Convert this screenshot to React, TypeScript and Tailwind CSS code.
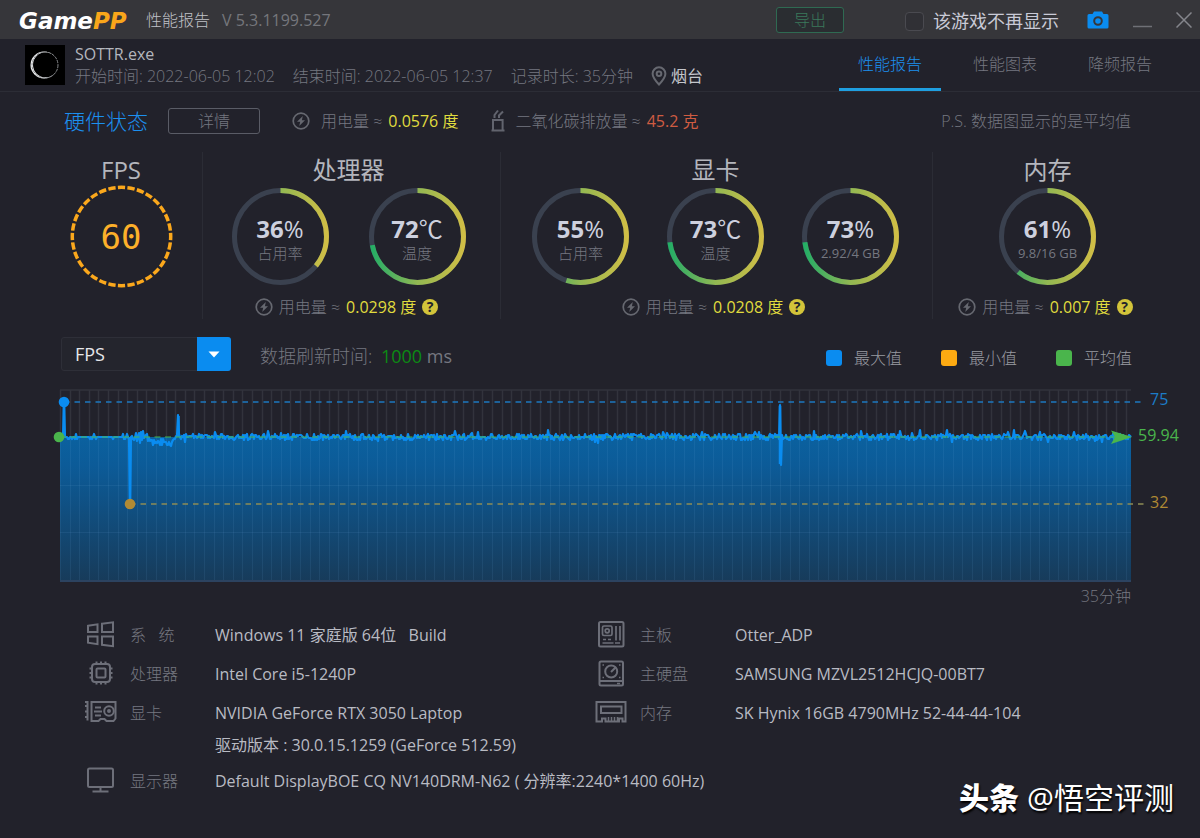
import { useState, type ReactNode } from "react";
import clsx from "clsx";

const BLUE = "#0a8cf0";
const GREEN = "#4ab54c";
const AMBER = "#b08a34";

const tabs = ["性能报告", "性能图表", "降频报告"];

const legend = [
  { label: "最大值", color: "bg-[#0a8cf0]" },
  { label: "最小值", color: "bg-[#fdaa12]" },
  { label: "平均值", color: "bg-[#4ab54c]" },
];

/* ---------- icons ---------- */

const BoltIcon = ({ className }: { className?: string }) => (
  <svg viewBox="0 0 18 18" className={clsx("w-[18px] h-[18px] shrink-0 text-[#666870]", className)} fill="none">
    <circle cx="9" cy="9" r="7.8" stroke="currentColor" strokeWidth="1.7" />
    <path d="M10.8 4 5 9.7h3.2L7.2 14l5.8-5.8H9.9z" fill="currentColor" />
  </svg>
);

const ChimneyIcon = () => (
  <svg viewBox="0 0 16 24" className="w-4 h-6 text-[#62646e]" fill="none" stroke="currentColor" strokeWidth="2">
    <path d="M1.5 21.5h13M3 21.5V11h9.6v10.5M2 11h11.6M4.5 9V6L8 1.5M9 9V6.5L13 2.5" />
  </svg>
);

const PinIcon = () => (
  <svg viewBox="0 0 16 20" className="w-4 h-5 text-[#666870]" fill="none" stroke="currentColor" strokeWidth="2">
    <path d="M8 18.5C4.2 14.4 1.6 11.2 1.6 7.7a6.4 6.4 0 0 1 12.8 0c0 3.5-2.6 6.7-6.4 10.8z" />
    <circle cx="8" cy="7.8" r="2.3" />
  </svg>
);

const CameraIcon = () => (
  <svg viewBox="0 0 22 18" className="w-[22px] h-[18px]">
    <path
      fillRule="evenodd"
      fill={BLUE}
      d="M7 .5h8l1.5 2.5H20a1.5 1.5 0 0 1 1.5 1.5v11.5A1.5 1.5 0 0 1 20 17.5H2a1.5 1.5 0 0 1-1.5-1.5v-11.5A1.5 1.5 0 0 1 2 3h3.5zM11 5.2a4.8 4.8 0 1 0 0 9.6 4.8 4.8 0 0 0 0-9.6zM11 7.2a2.8 2.8 0 1 1 0 5.6 2.8 2.8 0 0 1 0-5.6z"
    />
  </svg>
);

const HelpIcon = () => (
  <span className="flex items-center justify-center w-4 h-4 rounded-full bg-[#d3c43a] text-[#22232b] text-[14px] leading-4 font-bold">
    ?
  </span>
);

const DeviceIcon = ({ children }: { children: ReactNode }) => (
  <svg viewBox="0 0 32 28" className="w-8 h-7 shrink-0 text-[#6d6f79]" fill="none" stroke="currentColor" strokeWidth="2">
    {children}
  </svg>
);

const WindowsIcon = () => (
  <DeviceIcon>
    <path d="M3 4.8 12.5 3.3v7.7H3zM17 2.7 28 1.3V11H17zM3 15.5h9.5v7.7L3 21.7zM17 15.5h11v9.7l-11-1.4z" />
  </DeviceIcon>
);

const CpuIcon = () => (
  <DeviceIcon>
    <rect x="7" y="4" width="18" height="18" rx="3" />
    <rect x="11.5" y="8.5" width="9" height="9" rx="1" />
    <path d="M11.5 4V1.5M16 4V1.5M20.5 4V1.5M11.5 22v2.5M16 22v2.5M20.5 22v2.5M7 8.5H4.5M7 13H4.5M7 17.5H4.5M25 8.5H27.5M25 13H27.5M25 17.5H27.5" />
  </DeviceIcon>
);

const GpuIcon = () => (
  <DeviceIcon>
    <path d="M0 3h2.5v18.5M2.5 7H0M2.5 12.5H0M2.5 18H0" />
    <path d="M6.5 3h24v16.5l-2 2.5h-7l-2-2h-4l-2 2h-7zM10 8.5h6M9 12.5h8M10 16.5h6" />
    <circle cx="24" cy="12" r="4.8" />
    <circle cx="24" cy="12" r="1" />
  </DeviceIcon>
);

const MonitorIcon = () => (
  <DeviceIcon>
    <rect x="3" y="1.5" width="25" height="18.5" rx="1.5" />
    <path d="M15.5 20v4M7.5 24.5h16" />
  </DeviceIcon>
);

const BoardIcon = () => (
  <DeviceIcon>
    <rect x="4" y="1" width="24.5" height="24.5" rx="1.5" />
    <rect x="7.5" y="5" width="9.5" height="9.5" rx="1.5" strokeWidth="1.7" />
    <circle cx="12.2" cy="9.8" r="2" strokeWidth="1.7" />
    <path d="M21 5v14.5M25 5v14.5M8 18.5h3M13 18.5h3M7.5 22h11M20 22h5" strokeWidth="1.7" />
  </DeviceIcon>
);

const DiskIcon = () => (
  <DeviceIcon>
    <rect x="4.5" y="1.5" width="23.5" height="24" rx="1.5" />
    <circle cx="16.2" cy="11.5" r="6" />
    <path d="M16 12 21 7M5 21h23" />
    <path d="M7.5 5h1.5M24 5h1.5M7.5 17.5h1.5M24 17.5h1.5M22 23.5h3" strokeWidth="1.5" />
  </DeviceIcon>
);

const RamIcon = () => (
  <DeviceIcon>
    <path d="M1.5 3h29v19.5h-3v-3h-3.5v3H10.5v-3H7v3H1.5zM6 7.5h20.5v6.5H6z" />
    <path d="M13.5 22v-4M16.5 22v-4M19.5 22v-4M22.5 22v-4" strokeWidth="1.5" />
  </DeviceIcon>
);

/* ---------- metric rings ---------- */

interface RingProps {
  value: number;
  unit: string;
  caption: string;
  small?: boolean;
}

const Ring = ({ value, unit, caption, small }: RingProps) => (
  <div className="grid place-items-center w-[97px] h-[97px]">
    <svg viewBox="0 0 97 97" className="w-full h-full [grid-area:1/1]" fill="none" strokeWidth="5">
      <defs>
        <linearGradient id="ring" gradientUnits="userSpaceOnUse" x1="0" y1="0" x2="97" y2="0">
          <stop offset="0" stopColor="#1fae66" />
          <stop offset="0.2" stopColor="#4bb060" />
          <stop offset="0.5" stopColor="#92b852" />
          <stop offset="1" stopColor="#d3be45" />
        </linearGradient>
      </defs>
      <circle cx="48.5" cy="48.5" r="46" stroke="#3a414f" />
      <path
        d="M48.5 2.5a46 46 0 0 1 0 92a46 46 0 0 1 0-92"
        stroke="url(#ring)"
        pathLength={100}
        strokeDasharray={`${value} 100`}
      />
    </svg>
    <div className="[grid-area:1/1] pt-1 text-center">
      <div className="text-[24px] leading-7 text-[#cdd0de] font-normal">
        <span className="font-bold">{value}</span>
        {unit}
      </div>
      <div className={clsx("leading-5 text-[#757780]", small ? "text-[13px] font-normal" : "text-[15px]")}>
        {caption}
      </div>
    </div>
  </div>
);

const Power = ({ value }: { value: string }) => (
  <div className="flex items-center mt-[10px] mr-1 h-6 text-[16px] text-[#757780] whitespace-nowrap">
    <BoltIcon className="mr-[6px]" />
    用电量 ≈<span className="mx-[6px] text-[#e0dc3e] font-normal">{value} 度</span>
    <HelpIcon />
  </div>
);

interface MetricGroupProps {
  title: string;
  power: string;
  rings: RingProps[];
  className?: string;
  gap?: string;
}

const MetricGroup = ({ title, power, rings, className, gap = "gap-[38px]" }: MetricGroupProps) => (
  <section className={clsx("flex flex-col items-center border-l border-[#2b2c35]", className)}>
    <h2 className="text-[24px] leading-9 text-[#b4b6bd] font-normal">{title}</h2>
    <div className={clsx("flex", gap)}>
      {rings.map((ring, i) => (
        <Ring key={i} {...ring} />
      ))}
    </div>
    <Power value={power} />
  </section>
);

/* ---------- fps chart ---------- */

const LEFT = 20;
const RIGHT = 1091;
const TOP = 5;
const BOTTOM = 196;
const AVG = 52;

const noise = (i: number) => {
  const s = Math.sin(i * 127.1 + 311.7) * 43758.5453;
  return s - Math.floor(s);
};

const buildLine = () => {
  const points: string[] = [`${LEFT},${AVG}`, `23,${AVG}`, `24,17`, `25,${AVG}`];
  for (let x = 26; x <= RIGHT; x += 1) {
    const n = noise(x);
    let y = AVG;
    if (x < 90) {
      y += n > 0.92 ? -3 : n < 0.08 ? 2 : 0;
    } else if (x > 95 && x < 134) {
      y += x < 110 ? Math.round(n * 14) - 7 : Math.round(n * 7) + 2;
    } else {
      y += Math.round(n * 6) - 3;
      if (noise(x + 2000) > 0.96) y -= 4;
      if (noise(x + 4000) > 0.97) y += 3;
    }
    if (x === 90) y = 119;
    if (x === 138) y = 30;
    if (x === 740) y = 20;
    if (x === 741) y = 80;
    points.push(`${x},${y}`);
  }
  return points.join(" ");
};

const line = buildLine();
const gridLines = Array.from({ length: 112 }, (_, i) => Math.round(LEFT + i * 9.6)).filter((x) => x < RIGHT);

const FpsChart = () => (
  <svg viewBox="0 0 1160 225" className="block w-full h-auto text-[16px] font-normal" role="img" aria-label="FPS">
    <defs>
      <linearGradient id="area" x1="0" y1="0" x2="0" y2="1">
        <stop offset="0" stopColor="#0b619f" />
        <stop offset="0.2" stopColor="#0c5b98" />
        <stop offset="1" stopColor="#173b5a" />
      </linearGradient>
    </defs>
    <g stroke="#32333c" strokeWidth="1.5">
      {gridLines.map((x) => (
        <path key={x} d={`M${x + 0.5} ${TOP}V${AVG}`} />
      ))}
      <path d={`M${LEFT} ${TOP}H${RIGHT}`} />
    </g>
    <rect x={LEFT} y={AVG} width={RIGHT - LEFT} height={BOTTOM - AVG} fill="url(#area)" />
    <g stroke="#7ab0e0" strokeOpacity="0.1">
      {gridLines.map((x) => (
        <path key={x} d={`M${x + 0.5} ${AVG}V${BOTTOM}`} />
      ))}
      <path d={`M${LEFT} 100.5H${RIGHT}M${LEFT} 147.5H${RIGHT}`} />
    </g>
    <path d={`M${LEFT} ${BOTTOM}H${RIGHT}`} stroke="#2c4360" strokeWidth="2" />

    <path d="M24 17H1104" stroke="#1c78c0" strokeWidth="1.5" strokeDasharray="5.5 5" />
    <path d="M90 119H1104" stroke="#8d8c55" strokeWidth="1.5" strokeDasharray="5.5 5" />
    <polyline points={line} fill="none" stroke={BLUE} strokeWidth="2.2" strokeLinejoin="round" />
    <path d="M24 17V52M90 52V119M138.5 31V52M740 21V79" stroke={BLUE} strokeWidth="2.5" />
    <path d={`M${LEFT} ${AVG}H${RIGHT}`} stroke={GREEN} strokeWidth="1.2" strokeDasharray="6 4.5" />

    <circle cx="24" cy="17" r="5.3" fill={BLUE} />
    <circle cx="19" cy="52" r="5.3" fill={GREEN} />
    <circle cx="90" cy="119" r="5.3" fill={AMBER} />
    <path d="M1071 45.5 1092 52 1071 59 1075 52z" fill={GREEN} />

    <text x="1110" y="20" fill="#1c7cc8">75</text>
    <text x="1098" y="56" fill={GREEN}>59.94</text>
    <text x="1110" y="123" fill={AMBER}>32</text>
    <text x={RIGHT} y="217" textAnchor="end" className="font-light" fill="#757780">35分钟</text>
  </svg>
);

/* ---------- hardware list ---------- */

interface DeviceRowProps {
  icon?: ReactNode;
  label?: string;
  value: string;
  className?: string;
  labelClass?: string;
}

const DeviceRow = ({ icon, label, value, className = "h-[39px]", labelClass = "w-[85px]" }: DeviceRowProps) => (
  <div className={clsx("flex items-center whitespace-nowrap", className)}>
    <div className="w-[45px] shrink-0">{icon}</div>
    <dt className={clsx("shrink-0 whitespace-pre text-[#757780]", labelClass)}>{label}</dt>
    <dd className="text-[#b9bbc3] font-normal whitespace-pre">{value}</dd>
  </div>
);

const App = () => {
  const [activeTab, setActiveTab] = useState(tabs[0]);
  const [hideGame, setHideGame] = useState(false);

  return (
    <div className="relative min-h-screen bg-[#22222b] text-[16px] font-light font-['Open_Sans','Noto_Sans_CJK_SC',sans-serif]">
      <header className="flex items-center h-[39px] pl-[19px] pr-2 bg-[#36363a]">
        <div className="w-[127px] pt-1 text-[23px] leading-none font-bold italic text-white font-['DejaVu_Sans',sans-serif]">
          Game<span className="text-[#f9a61a]">PP</span>
        </div>
        <h1 className="text-[#c0c2c8]">性能报告</h1>
        <span className="ml-3 text-[#75767c] font-normal">V 5.3.1199.527</span>

        <div className="flex items-center ml-auto">
          <button className="w-[68px] h-[26px] mr-[61px] rounded-[3px] border border-[#2f6a52] bg-[#2a2d31] text-[#3a7a5c] leading-none">
            导出
          </button>
          <label className="flex items-center gap-[6px] mr-7 pt-1 text-[18px] text-[#c9cad6] font-normal">
            <input
              type="checkbox"
              checked={hideGame}
              onChange={(e) => setHideGame(e.target.checked)}
              className="appearance-none w-[19px] h-[19px] mr-[3px] rounded-[4px] border border-[#4a4a50] bg-[#303035] checked:bg-[#0a8cf0]"
            />
            该游戏不再显示
          </label>
          <button aria-label="截图" className="mr-6">
            <CameraIcon />
          </button>
          <button aria-label="最小化" className="mr-6">
            <svg viewBox="0 0 19 16" className="w-[19px] h-4" stroke="#6f7076" strokeWidth="1.5">
              <path d="M0 14.5h19" />
            </svg>
          </button>
          <button aria-label="关闭">
            <svg viewBox="0 0 16 16" className="w-4 h-4" stroke="#85868c" strokeWidth="1.5">
              <path d="M.5.5l15 15M15.5.5l-15 15" />
            </svg>
          </button>
        </div>
      </header>

      <div className="flex items-center h-[53px] pl-[25px] pr-[29px] border-b border-[#2c2d36]">
        <svg viewBox="0 0 40 40" className="w-10 h-10 mr-[10px] bg-black">
          <circle cx="19" cy="20" r="13.5" fill="#f2f3f4" />
          <circle cx="20.5" cy="19.8" r="12.5" fill="#000" />
          <circle cx="20" cy="20" r="13" fill="none" stroke="#85878b" strokeWidth="1" strokeDasharray="3 1" />
        </svg>
        <div className="leading-[22px] whitespace-nowrap">
          <div className="text-[#b4b6bd] font-normal">SOTTR.exe</div>
          <div className="flex items-center gap-[18px] text-[#757780]">
            <span>开始时间: 2022-06-05 12:02</span>
            <span>结束时间: 2022-06-05 12:37</span>
            <span>记录时长: 35分钟</span>
            <span className="flex items-center gap-1 text-[#c5c7cd] font-normal">
              <PinIcon />
              烟台
            </span>
          </div>
        </div>
        <nav className="flex self-stretch gap-[13px] ml-auto">
          {tabs.map((tab) => (
            <button
              key={tab}
              onClick={() => setActiveTab(tab)}
              className={clsx(
                "w-[102px] border-b-[3px]",
                tab === activeTab ? "border-[#1f9fe0] text-[#1c90f0]" : "border-transparent text-[#757780]"
              )}
            >
              {tab}
            </button>
          ))}
        </nav>
      </div>

      <main>
        <div className="flex items-center pt-4 pl-[64px] pr-[69px] text-[#757780] whitespace-nowrap">
          <h2 className="text-[21px] leading-[26px] text-[#1c90f0]">硬件状态</h2>
          <button className="w-[92px] h-[26px] ml-5 rounded-[3px] border border-[#5a5c66] leading-none">详情</button>
          <BoltIcon className="ml-8 mr-[11px]" />
          用电量 ≈<span className="ml-[6px] mr-8 text-[#e0dc3e] font-normal">0.0576 度</span>
          <ChimneyIcon />
          <span className="ml-[9px]">二氧化碳排放量 ≈</span>
          <span className="ml-[6px] text-[#cf5c42] font-normal">45.2 克</span>
          <span className="ml-auto">P.S. 数据图显示的是平均值</span>
        </div>

        <div className="grid grid-cols-[202fr_298fr_432fr_268fr] mt-[18px]">
          <section className="flex flex-col items-center pl-10">
            <h2 className="text-[24px] leading-9 text-[#b4b6bd] font-normal">FPS</h2>
            <div className="grid place-items-center w-[97px] h-[97px]">
              <svg viewBox="0 0 97 97" className="w-full h-full overflow-visible [grid-area:1/1]" fill="none">
                <circle
                  cx="48.5"
                  cy="48.5"
                  r="49.2"
                  stroke="#fba81c"
                  strokeWidth="3.5"
                  pathLength={320}
                  strokeDasharray="7.6 2.4"
                  strokeDashoffset="3.8"
                />
              </svg>
              <span className="[grid-area:1/1] text-[34px] leading-none text-[#fdb02a] font-normal font-['DejaVu_Sans_Mono',monospace]">
                60
              </span>
            </div>
          </section>
          <MetricGroup
            title="处理器"
            power="0.0298"
            className="pr-[6px]"
            gap="gap-10"
            rings={[
              { value: 36, unit: "%", caption: "占用率" },
              { value: 72, unit: "℃", caption: "温度" },
            ]}
          />
          <MetricGroup
            title="显卡"
            power="0.0208"
            className="pr-[2px]"
            rings={[
              { value: 55, unit: "%", caption: "占用率" },
              { value: 73, unit: "℃", caption: "温度" },
              { value: 73, unit: "%", caption: "2.92/4 GB", small: true },
            ]}
          />
          <MetricGroup
            title="内存"
            power="0.007"
            className="pr-[38px]"
            rings={[{ value: 61, unit: "%", caption: "9.8/16 GB", small: true }]}
          />
        </div>

        <div className="flex items-center mt-[18px] pl-[61px] pr-[68px]">
          <div className="relative w-[170px] h-[34px]">
            <select
              aria-label="指标"
              className="appearance-none w-full h-full pl-[13px] rounded-[3px] border border-[#2e2f38] bg-[#24252d] text-[18px] leading-none text-[#e6e7ea] font-normal"
            >
              <option>FPS</option>
            </select>
            <span className="pointer-events-none absolute inset-y-0 right-0 flex items-center justify-center w-[34px] rounded-r-[3px] bg-[#0a8cf0]">
              <svg viewBox="0 0 12 7" className="w-3 h-[7px]" fill="#fff">
                <path d="M.5.5h11L6 6.5z" />
              </svg>
            </span>
          </div>
          <p className="ml-[29px] pt-1 text-[18px] text-[#757780]">
            数据刷新时间: <span className="ml-1 text-[#0c8a14] font-normal">1000</span>{" "}
            <span className="font-normal">ms</span>
          </p>
          <ul className="flex gap-[39px] ml-auto pt-2 text-[#989aa1]">
            {legend.map(({ label, color }) => (
              <li key={label} className="flex items-center gap-3">
                <span className={clsx("w-4 h-4 rounded-[3px]", color)} />
                {label}
              </li>
            ))}
          </ul>
        </div>

        <div className="mt-[14px] pl-10">
          <FpsChart />
        </div>

        <dl className="grid grid-cols-[minmax(0,510fr)_minmax(0,605fr)] mt-[5px] pl-[85px]">
          <div>
            <DeviceRow icon={<WindowsIcon />} label="系   统" value="Windows 11 家庭版 64位   Build" />
            <DeviceRow icon={<CpuIcon />} label="处理器" value="Intel Core i5-1240P" />
            <DeviceRow icon={<GpuIcon />} label="显卡" value="NVIDIA GeForce RTX 3050 Laptop" />
            <DeviceRow value="驱动版本 : 30.0.15.1259 (GeForce 512.59)" className="h-[26px]" />
            <DeviceRow
              icon={<MonitorIcon />}
              label="显示器"
              value="Default DisplayBOE CQ NV140DRM-N62 ( 分辨率:2240*1400 60Hz)"
              className="h-[46px]"
            />
          </div>
          <div>
            <DeviceRow icon={<BoardIcon />} label="主板" value="Otter_ADP" labelClass="w-[95px]" />
            <DeviceRow icon={<DiskIcon />} label="主硬盘" value="SAMSUNG MZVL2512HCJQ-00BT7" labelClass="w-[95px]" />
            <DeviceRow icon={<RamIcon />} label="内存" value="SK Hynix 16GB 4790MHz 52-44-44-104" labelClass="w-[95px]" />
          </div>
        </dl>
      </main>

      <div className="absolute right-[26px] bottom-[18px] flex items-center gap-2 text-[30px] leading-[44px] text-white [text-shadow:1px_2px_2px_#000]">
        <span className="font-black">头条</span>
        <span className="font-normal">@悟空评测</span>
      </div>
    </div>
  );
};

export default App;
